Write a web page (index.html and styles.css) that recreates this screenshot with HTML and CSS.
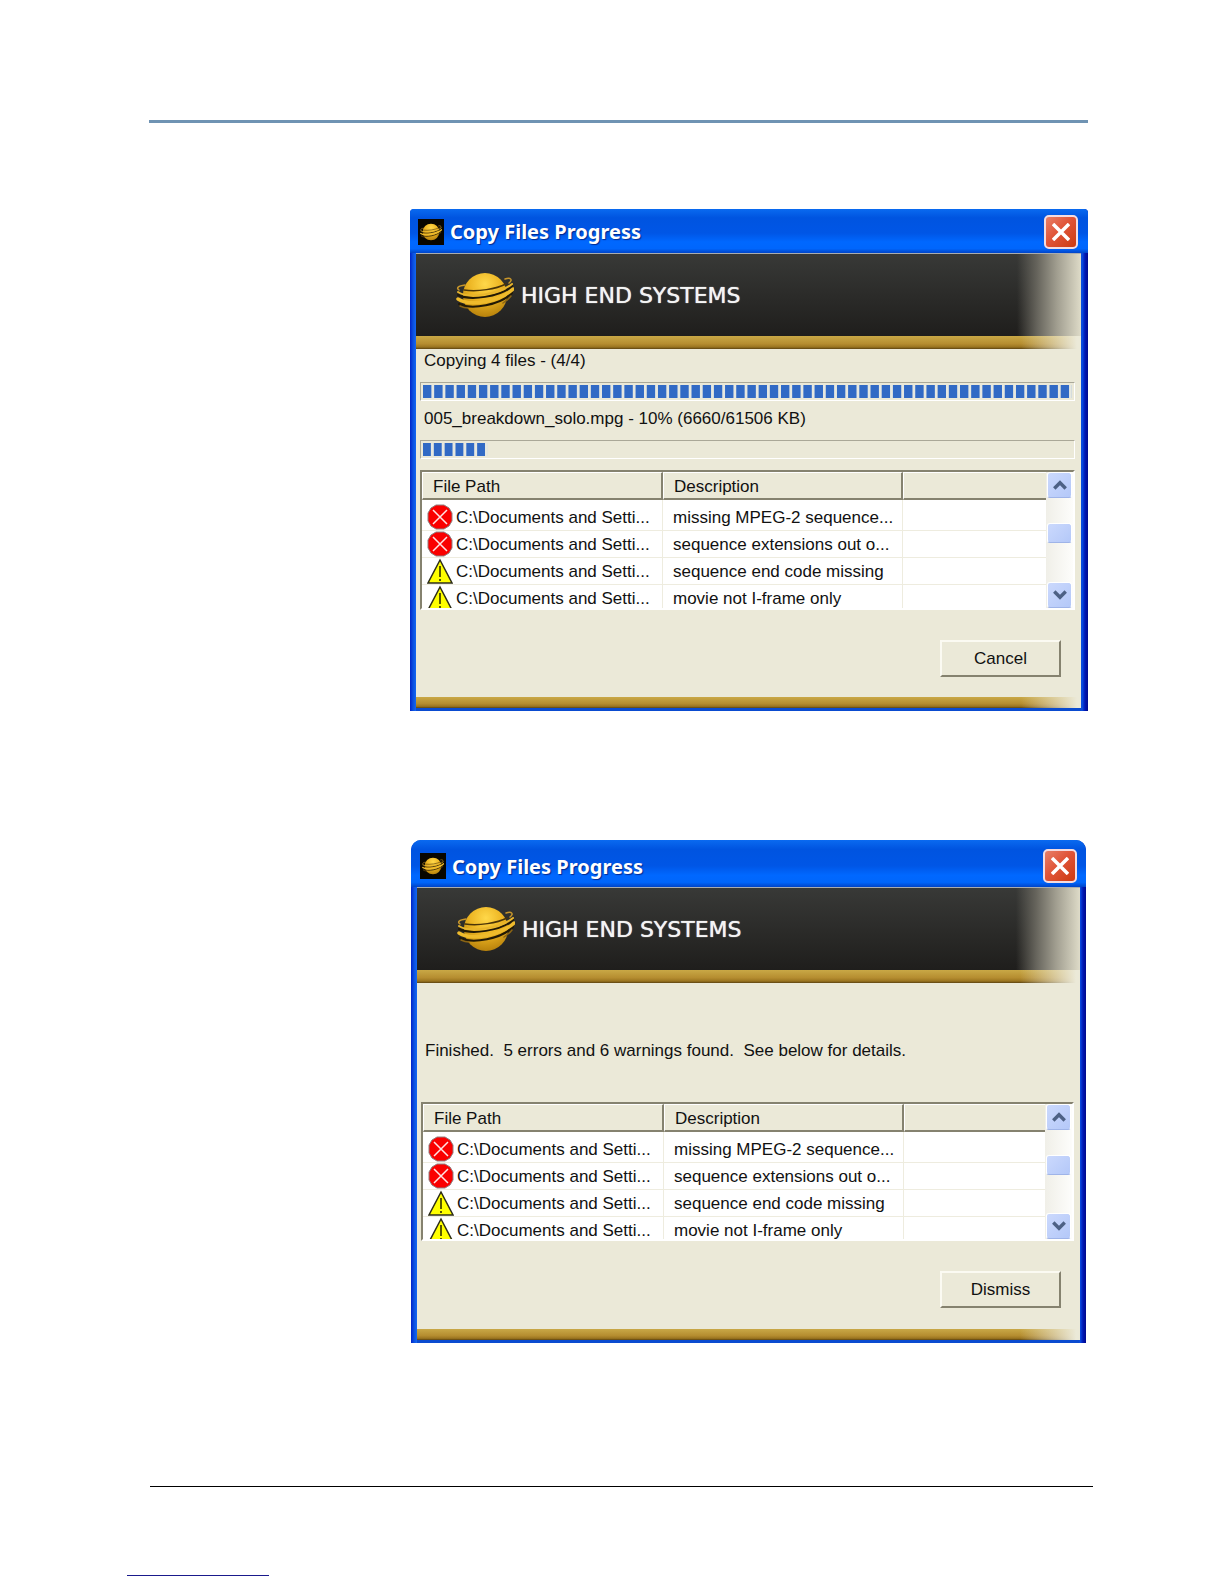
FILE: index.html
```html
<!DOCTYPE html>
<html lang="en">
<head>
<meta charset="utf-8">
<title>Copy Files Progress</title>
<link rel="stylesheet" href="styles.css">
</head>
<body>
<svg class="defs" aria-hidden="true">
  <defs>
    <radialGradient id="gold" cx="50%" cy="25%" r="75%">
      <stop offset="0" stop-color="#ffd84a"/>
      <stop offset="0.5" stop-color="#ecb422"/>
      <stop offset="1" stop-color="#b8820c"/>
    </radialGradient>
    <symbol id="globe" viewBox="0 0 58 46">
      <circle cx="29" cy="23" r="22" fill="url(#gold)"/>
      <g fill="none" stroke-linecap="round">
        <path d="M2 23C14 29 44 25 56 14" stroke="#221905" stroke-width="2"/>
        <path d="M3 32C16 38 44 33 56 21" stroke="#221905" stroke-width="2"/>
        <path d="M8 18C22 20 40 17 50 12" stroke="#4a3408" stroke-width="1.5"/>
        <path d="M9 13C2 14 0 16 3 18M49 7C55 5 57 8 53 11" stroke="#c8962a" stroke-width="1.5"/>
        <path d="M2 20C12 27 44 22 56 12" stroke="#e8b52c" stroke-width="2"/>
        <path d="M2 27C14 35 44 29 57 17" stroke="#efbb2c" stroke-width="3.5"/>
        <path d="M4 34C8 36 9 36 12 36M47 31C50 29 53 27 55 24" stroke="#8a6414" stroke-width="1.5"/>
      </g>
    </symbol>
    <symbol id="error" viewBox="0 0 26 26">
      <path d="M9 1h8l5 3 3 5v8l-3 5-5 3H9l-5-3-3-5V9l3-5z" fill="#fa0000" stroke="#8f8080" stroke-width="1"/>
      <path d="M6 6l14 14M20 6L6 20" stroke="#ffe4e4" stroke-width="1.5"/>
    </symbol>
    <symbol id="warning" viewBox="0 0 26 26">
      <path d="M13 2L25 25H1z" fill="#ffff00" stroke="#2c2c18" stroke-width="1.5"/>
      <path d="M13 8v11M13 21v2" stroke="#222200" stroke-width="1.5"/>
    </symbol>
    <symbol id="cross" viewBox="0 0 18 18">
      <path d="M1 1L17 17M17 1L1 17" stroke="#fff" stroke-width="3.5"/>
    </symbol>
    <symbol id="up" viewBox="0 0 14 10">
      <path d="M2 8l5-5 5 5" fill="none" stroke="#4d6185" stroke-width="3"/>
    </symbol>
    <symbol id="down" viewBox="0 0 14 10">
      <path d="M2 2l5 5 5-5" fill="none" stroke="#4d6185" stroke-width="3"/>
    </symbol>
  </defs>
</svg>

<main class="page">
  <section class="window" aria-label="Copy in progress">
    <header class="titlebar">
      <span class="app-icon"><svg><use href="#globe"/></svg></span>
      <h2>Copy Files Progress</h2>
      <button class="close" type="button" aria-label="Close"><svg><use href="#cross"/></svg></button>
    </header>
    <div class="client">
      <div class="banner">
        <svg class="logo"><use href="#globe"/></svg>
        <span>HIGH END SYSTEMS</span>
      </div>
      <div class="gold"></div>
      <div class="content">
        <label for="total">Copying 4 files - (4/4)</label>
        <progress id="total" class="full" max="100" value="100"></progress>
        <label for="current">005_breakdown_solo.mpg - 10% (6660/61506 KB)</label>
        <progress id="current" class="partial" max="100" value="10"></progress>
        <div class="list">
          <table>
            <colgroup><col class="path"><col class="desc"><col></colgroup>
            <thead><tr><th>File Path</th><th>Description</th><td></td></tr></thead>
            <tbody>
              <tr><td><svg><use href="#error"/></svg>C:\Documents and Setti...</td><td>missing MPEG-2 sequence...</td><td></td></tr>
              <tr><td><svg><use href="#error"/></svg>C:\Documents and Setti...</td><td>sequence extensions out o...</td><td></td></tr>
              <tr><td><svg><use href="#warning"/></svg>C:\Documents and Setti...</td><td>sequence end code missing</td><td></td></tr>
              <tr><td><svg><use href="#warning"/></svg>C:\Documents and Setti...</td><td>movie not I-frame only</td><td></td></tr>
            </tbody>
          </table>
          <div class="scrollbar">
            <button type="button" aria-label="Scroll up"><svg><use href="#up"/></svg></button>
            <span class="thumb"></span>
            <button type="button" aria-label="Scroll down"><svg><use href="#down"/></svg></button>
          </div>
        </div>
        <button class="action" type="button">Cancel</button>
      </div>
      <div class="gold foot"></div>
    </div>
  </section>

  <section class="window finished" aria-label="Copy finished">
    <header class="titlebar">
      <span class="app-icon"><svg><use href="#globe"/></svg></span>
      <h2>Copy Files Progress</h2>
      <button class="close" type="button" aria-label="Close"><svg><use href="#cross"/></svg></button>
    </header>
    <div class="client">
      <div class="banner">
        <svg class="logo"><use href="#globe"/></svg>
        <span>HIGH END SYSTEMS</span>
      </div>
      <div class="gold"></div>
      <div class="content">
        <p class="summary">Finished.&nbsp; 5 errors and 6 warnings found.&nbsp; See below for details.</p>
        <div class="list">
          <table>
            <colgroup><col class="path"><col class="desc"><col></colgroup>
            <thead><tr><th>File Path</th><th>Description</th><td></td></tr></thead>
            <tbody>
              <tr><td><svg><use href="#error"/></svg>C:\Documents and Setti...</td><td>missing MPEG-2 sequence...</td><td></td></tr>
              <tr><td><svg><use href="#error"/></svg>C:\Documents and Setti...</td><td>sequence extensions out o...</td><td></td></tr>
              <tr><td><svg><use href="#warning"/></svg>C:\Documents and Setti...</td><td>sequence end code missing</td><td></td></tr>
              <tr><td><svg><use href="#warning"/></svg>C:\Documents and Setti...</td><td>movie not I-frame only</td><td></td></tr>
            </tbody>
          </table>
          <div class="scrollbar">
            <button type="button" aria-label="Scroll up"><svg><use href="#up"/></svg></button>
            <span class="thumb"></span>
            <button type="button" aria-label="Scroll down"><svg><use href="#down"/></svg></button>
          </div>
        </div>
        <button class="action" type="button">Dismiss</button>
      </div>
      <div class="gold foot"></div>
    </div>
  </section>
</main>
<footer class="footer">
  <hr class="rule">
  <hr class="link-rule">
</footer>
</body>
</html>
```
FILE: styles.css
```css
* { box-sizing: border-box; }

body {
  margin: 0;
  padding-top: 120px;
  background: #fff;
  color: #111;
  font: 17px/22px "Liberation Sans", Arial, sans-serif;
}

.defs { display: block; width: 0; height: 0; position: absolute; }

button { padding: 0; font: inherit; color: inherit; }

.page {
  margin: 0 136px 0 149px;
  padding: 86px 0 0 261px;
  border-top: 3px solid #6f93b3;
}

/* Dialog frame */
.window {
  padding: 0 7px 3px 6px;
  border-radius: 4px 4px 0 0;
  background:
    linear-gradient(90deg, #0024c8, #0a4fe0 3px, #1467f0 6px, transparent 6px),
    linear-gradient(270deg, #000a8c, #0018b4 3px, #0a4fe4 6px, transparent 7px),
    #0a4bd0;
}

.titlebar {
  display: flex;
  align-items: center;
  height: 44px;
  margin: 0 -7px 0 -6px;
  padding: 1px 10px 0 8px;
  border-radius: inherit;
  background: linear-gradient(#0a6af0, #0054e0 20%, #0056e6 55%, #0068ff 75%, #0066fc 90%, #0044c8);
}

.app-icon {
  display: flex;
  align-items: center;
  width: 26px;
  height: 26px;
  padding: 2px;
  background: #080600;
}

.app-icon svg { width: 22px; height: 18px; }

.titlebar h2 {
  flex: 1;
  margin: 0 0 0 6px;
  padding-top: 1px;
  color: #fff;
  font: bold 20px/26px "Noto Sans", sans-serif;
  text-shadow: 1px 1px 1px #002a90;
}

.close {
  display: grid;
  place-items: center;
  width: 34px;
  height: 34px;
  border: 2px solid #f4dce0;
  border-radius: 5px;
  background: linear-gradient(135deg, #e88068, #e05438 45%, #cc3a10);
}

.close svg { width: 18px; height: 18px; }

.client { background: #ebe9d8; }

.banner {
  display: flex;
  align-items: center;
  gap: 7px;
  height: 83px;
  padding-left: 40px;
  border-top: 1px solid #a8acb0;
  background:
    linear-gradient(270deg, #dedbc8, #a19e90 24px, #66645c 44px, rgb(48 48 45 / 0) 64px),
    linear-gradient(#383937, #1f1e1c);
  color: #f4f4f4;
  font: 22px/26px "DejaVu Sans", sans-serif;
  text-shadow: 0 0 1px #fff;
}

.banner span { padding-top: 2px; }

.logo { width: 58px; height: 46px; }

.gold {
  height: 13px;
  background:
    linear-gradient(270deg, #ebe9d8 4px, rgb(235 233 216 / 0) 60px),
    linear-gradient(#c9a846, #b58d30 60%, #9a7420 85%, #5c4310);
}

.foot { height: 11px; }

.content {
  display: flex;
  flex-direction: column;
  padding: 0 6px 20px 4px;
}

.content label { margin: 1px 0 10px 4px; }

/* Segmented progress bars */
progress {
  appearance: none;
  width: 100%;
  height: 19px;
  padding: 2px;
  border: 1px solid;
  border-color: #aaa898 #fff #fff #aaa898;
  background: #ebe9d8;
}

progress::-webkit-progress-bar { background: transparent; }

progress::-webkit-progress-value {
  background: linear-gradient(90deg, #316ac5 72%, #e6e8e0 72%) 0 0 / calc(100% / var(--blocks)) 100%;
}

.full { --blocks: 58; margin-bottom: 6px; }
.partial { --blocks: 6; margin-bottom: 11px; }

/* File list */
.list {
  display: flex;
  height: 140px;
  overflow: hidden;
  border: 2px solid;
  border-color: #85826f #fff #fff #85826f;
  background: #fff;
}

.list table {
  flex: 1;
  align-self: flex-start;
  table-layout: fixed;
  border-collapse: separate;
  border-spacing: 0;
}

.path { width: 241px; }
.desc { width: 240px; }

.list th,
.list thead td {
  height: 28px;
  padding: 3px 0 0 10px;
  border: solid;
  border-width: 1px 2px 2px 1px;
  border-color: #fff #85826f #85826f #fff;
  background: #ebe9d8;
  font-weight: normal;
  text-align: left;
}

.list thead td { border-right: 0; }

.list tbody td {
  height: 27px;
  padding: 2px 0 0 10px;
  border-right: 1px solid #eeecdf;
  border-bottom: 1px solid #eeecdf;
  line-height: 24px;
  white-space: nowrap;
}

.list tbody tr:first-child td { height: 31px; padding-top: 6px; }
.list tbody td:first-child { padding-left: 5px; }
.list tbody td:last-child { border-right: 0; }

.list td svg {
  width: 26px;
  height: 26px;
  margin: -4px 3px 0 0;
  vertical-align: middle;
}

.scrollbar {
  display: flex;
  flex-direction: column;
  width: 27px;
  background: linear-gradient(90deg, #f0efe8, #fdfdfb);
}

.scrollbar button,
.thumb {
  display: grid;
  place-items: center;
  height: 26px;
  margin: 0 1px;
  border: 1px solid #fff;
  border-bottom-color: #9fb4e8;
  border-radius: 3px;
  background: linear-gradient(135deg, #cbd9fd, #b4c8f8);
}

.scrollbar svg { width: 16px; height: 12px; }
.thumb { height: 20px; margin: 25px 1px auto; }

.action {
  align-self: flex-end;
  width: 121px;
  height: 37px;
  margin: 30px 14px 0 0;
  border: 2px solid;
  border-color: #fbfaf2 #85826f #85826f #fbfaf2;
  background: #ebe9d8;
}

/* Dialog shown when the copy has ended */
.finished {
  margin: 129px 2px 0 1px;
  padding-right: 6px;
  border-radius: 10px 10px 0 0;
}

.finished .titlebar { height: 47px; margin-right: -6px; padding: 5px 9px 0 9px; }
.finished .content { padding-bottom: 21px; }
.finished .action { margin-right: 13px; }
.finished .list { height: 139px; }

.summary { margin: 57px 0 40px 4px; }

.footer { padding: 143px 131px 8px 127px; }

.footer hr { margin: 0; border: 0; height: 1px; }

.footer .rule { margin-left: 23px; background: #000; }

.footer .link-rule { width: 142px; margin-top: 88px; background: #1a1a8c; }
```
